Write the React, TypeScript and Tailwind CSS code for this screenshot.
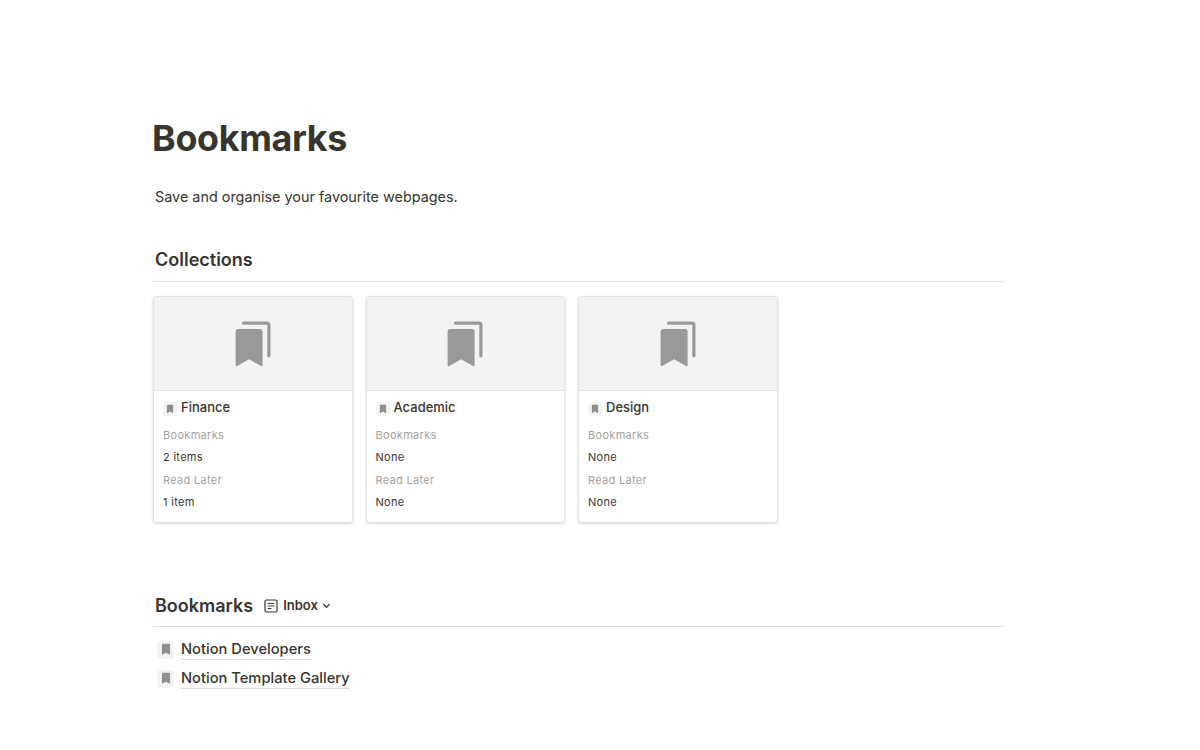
const font = { fontFamily: "Inter, sans-serif" };

function BookmarkGlyph({ className }: { className: string }) {
  return (
    <svg viewBox="0 0 12 16" className={className} fill="#8f8f8f">
      <path d="M2 1h8a1 1 0 0 1 1 1v12.6L6 12 1 14.6V2a1 1 0 0 1 1-1z" />
    </svg>
  );
}

function StackedBookmark() {
  return (
    <svg viewBox="0 0 36 46" className="w-[36px] h-[46px]">
      <path d="M8.5 2.2h23.8a1.6 1.6 0 0 1 1.6 1.6v31" fill="none" stroke="#999999" strokeWidth="3.2" strokeLinecap="round" strokeLinejoin="round" />
      <path d="M3 8h22a2.6 2.6 0 0 1 2.6 2.6v33.6a1 1 0 0 1-1.6.8L14 38.2 2.2 45a1 1 0 0 1-1.6-.8V10.6A2.6 2.6 0 0 1 3 8z" fill="#999999" />
    </svg>
  );
}

function Card({ title, bookmarks, later }: { title: string; bookmarks: string; later: string }) {
  return (
    <div className="w-[199.5px] h-[227px] rounded-[3px] border border-[#e3e3e1] bg-white shadow-[0_1px_3px_rgba(15,15,15,0.16)] overflow-hidden">
      <div className="h-[94px] bg-[#f3f3f3] border-b border-[#e3e3e1] flex items-center justify-center">
        <StackedBookmark />
      </div>
      <div className="pl-[9px] pt-[6px]">
        <div className="flex items-center gap-[4px] h-[20px]">
          <span className="w-[14px] h-[14px] mt-[4px] rounded-[3px] bg-[#f3f3f2] flex items-center justify-center">
            <BookmarkGlyph className="w-[8px] h-[10px]" />
          </span>
          <span className="text-[13px] font-medium text-[#37352f] leading-[20px]">{title}</span>
        </div>
        <div className="mt-[7px] text-[11px] leading-[22.3px] tracking-[0.3px]">
          <div className="text-[#a3a29e]">Bookmarks</div>
          <div className="text-[#37352f]">{bookmarks}</div>
          <div className="text-[#a3a29e]">Read Later</div>
          <div className="text-[#37352f]">{later}</div>
        </div>
      </div>
    </div>
  );
}

function LinkRow({ label }: { label: string }) {
  return (
    <div className="h-[29px] flex items-center pl-[4px]">
      <span className="w-[17px] h-[18px] rounded-[3px] bg-[#f3f3f2] flex items-center justify-center">
        <BookmarkGlyph className="w-[10px] h-[13px]" />
      </span>
      <span className="ml-[7px] text-[14.7px] font-medium text-[#37352f] leading-[20px] border-b border-[#d9d9d6]">{label}</span>
    </div>
  );
}

export default function App() {
  return (
    <div className="w-[1200px] h-[750px] bg-white overflow-hidden pl-[153px] pt-[114px]" style={font}>
      <h1 className="-ml-[1px] text-[35.8px] leading-[48px] font-bold text-[#37352f] tracking-[-0.3px]">Bookmarks</h1>

      <p className="mt-[24px] pl-[2px] text-[14.4px] leading-[22px] text-[#37352f]">Save and organise your favourite webpages.</p>

      <div className="mt-[39px] w-[851px] border-b border-[#dfdfdd] h-[35px] pl-[2px]">
        <h2 className="text-[18px] leading-[25px] font-semibold text-[#37352f]">Collections</h2>
      </div>

      <div className="mt-[14px] flex gap-[13px]">
        <Card title="Finance" bookmarks="2 items" later="1 item" />
        <Card title="Academic" bookmarks="None" later="None" />
        <Card title="Design" bookmarks="None" later="None" />
      </div>

      <div className="mt-[69px] w-[851px] border-b border-[#dfdfdd] h-[35px] pl-[2px] flex items-start">
        <h2 className="text-[18px] leading-[27px] font-semibold text-[#37352f]">Bookmarks</h2>
        <div className="ml-[11px] h-[27px] flex items-center gap-[4px]">
          <svg viewBox="0 0 14 14" className="w-[14px] h-[14px] mr-[1px]" fill="none" stroke="#37352f" strokeWidth="1.2">
            <rect x="1" y="1" width="12" height="12" rx="1.5" />
            <path d="M3.8 4.5h6.4M3.8 7h6.4M3.8 9.5h3.6" />
          </svg>
          <span className="text-[13px] font-semibold text-[#37352f]">Inbox</span>
          <svg viewBox="0 0 10 10" className="w-[9px] h-[9px]" fill="none" stroke="#37352f" strokeWidth="1.4">
            <path d="M1.5 3.5 5 7l3.5-3.5" />
          </svg>
        </div>
      </div>

      <div className="mt-[8px]">
        <LinkRow label="Notion Developers" />
        <LinkRow label="Notion Template Gallery" />
      </div>
    </div>
  );
}
